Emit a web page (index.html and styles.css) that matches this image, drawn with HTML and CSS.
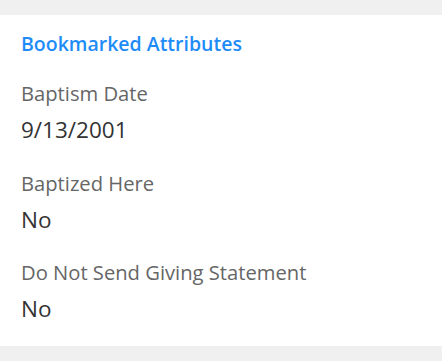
FILE: index.html
```html
<!DOCTYPE html>
<html lang="en">
<head>
	<meta charset="UTF-8">
	<title>Bookmarked Attributes</title>
	<link rel="stylesheet" href="styles.css">
</head>
<body>
	<div class="panel">
		<h3 class="panelTitle">Bookmarked Attributes</h3>
		<dl class="attrList">
			<div class="attr">
				<dt>Baptism Date</dt>
				<dd>9/13/2001</dd>
			</div>
			<div class="attr">
				<dt>Baptized Here</dt>
				<dd>No</dd>
			</div>
			<div class="attr">
				<dt>Do Not Send Giving Statement</dt>
				<dd>No</dd>
			</div>
		</dl>
	</div>
</body>
</html>
```

FILE: styles.css
```css
*{
	margin: 0;
	padding: 0;
}
body{
	background-color: #f0f0f0;
	padding: 15px 0;
	font-family: "Open Sans", "Noto Sans", sans-serif;
}
.panel{
	background-color: #fff;
	padding: 16px 20px 22px 21px;
}
.panelTitle{
	font-size: 19.5px;
	line-height: 26px;
	font-weight: 600;
	color: #1e8cf8;
	margin-bottom: 24px;
}
.attr{
	margin-bottom: 25.5px;
}
.attr:last-child{
	margin-bottom: 0;
}
.attr dt{
	font-size: 20.2px;
	line-height: 24px;
	color: #666;
	margin-bottom: 10px;
}
.attr dd{
	font-size: 22.5px;
	line-height: 30px;
	color: #333;
}
```
